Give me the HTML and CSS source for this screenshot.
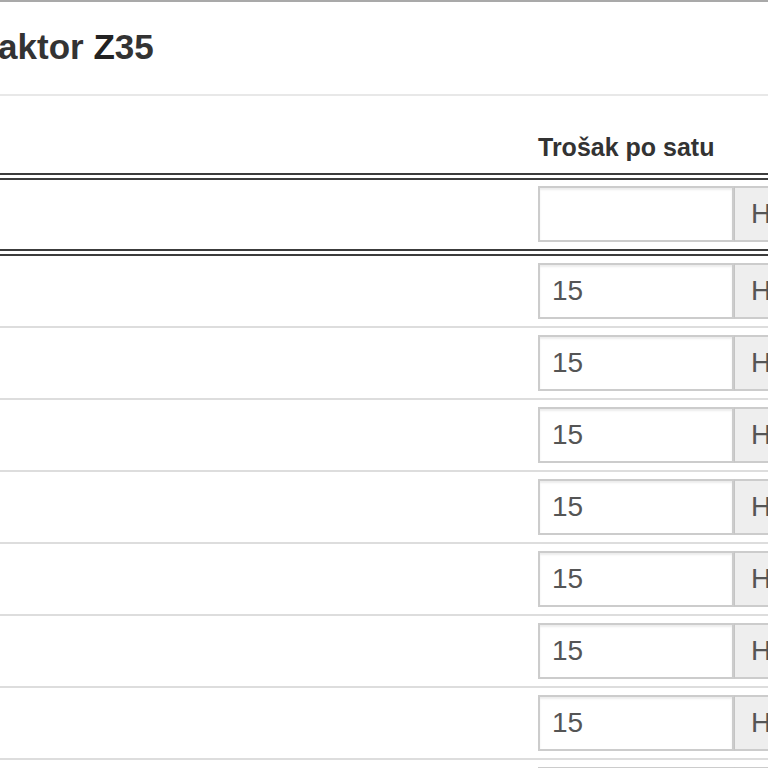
FILE: index.html
```html
<!DOCTYPE html>
<html lang="hr">
<head>
<meta charset="utf-8">
<title>Traktor Z35</title>
<link rel="stylesheet" href="styles.css">
</head>
<body>
<div class="modal">
  <div class="modal-header">
    <h4 class="modal-title">Traktor <b>Z</b>35</h4>
  </div>
  <div class="modal-body">
    <table class="cost-table">
      <thead>
        <tr><th class="col-name"></th><th class="col-cost">Trošak po satu</th></tr>
      </thead>
      <tbody class="default-row">
        <tr>
          <td class="col-name"></td>
          <td class="col-cost"><div class="input-group"><input class="form-control" type="text" value=""><span class="addon">HRK</span></div></td>
        </tr>
      </tbody>
      <tbody class="rows">
        <tr><td class="col-name"></td><td class="col-cost"><div class="input-group"><input class="form-control" type="text" value="15"><span class="addon">HRK</span></div></td></tr>
        <tr><td class="col-name"></td><td class="col-cost"><div class="input-group"><input class="form-control" type="text" value="15"><span class="addon">HRK</span></div></td></tr>
        <tr><td class="col-name"></td><td class="col-cost"><div class="input-group"><input class="form-control" type="text" value="15"><span class="addon">HRK</span></div></td></tr>
        <tr><td class="col-name"></td><td class="col-cost"><div class="input-group"><input class="form-control" type="text" value="15"><span class="addon">HRK</span></div></td></tr>
        <tr><td class="col-name"></td><td class="col-cost"><div class="input-group"><input class="form-control" type="text" value="15"><span class="addon">HRK</span></div></td></tr>
        <tr><td class="col-name"></td><td class="col-cost"><div class="input-group"><input class="form-control" type="text" value="15"><span class="addon">HRK</span></div></td></tr>
        <tr><td class="col-name"></td><td class="col-cost"><div class="input-group"><input class="form-control" type="text" value="15"><span class="addon">HRK</span></div></td></tr>
        <tr><td class="col-name"></td><td class="col-cost"><div class="input-group"><input class="form-control" type="text" value="15"><span class="addon">HRK</span></div></td></tr>
      </tbody>
    </table>
  </div>
</div>
</body>
</html>
```
FILE: styles.css
```css
html, body {
  margin: 0;
  padding: 0;
  background: #fff;
  overflow: hidden;
}
body {
  font-family: "Liberation Sans", Arial, sans-serif;
  color: #333;
}
.modal {
  margin-left: -35px;
  width: 1000px;
  border-top: 2px solid #a9a9a9;
  background: #fff;
}
.modal-header {
  padding: 26px 0 28px 0;
  border-bottom: 2px solid #e8e8e8;
}
.modal-title {
  margin: 0;
  font-size: 35px;
  line-height: 38px;
  font-weight: bold;
  color: #333;
}
.modal-title b {
  color: #222;
}
.modal-body {
  padding-top: 30px;
}
.cost-table {
  border-collapse: separate;
  border-spacing: 0;
  width: 1000px;
}
.cost-table th,
.cost-table td {
  text-align: left;
  vertical-align: top;
}
.col-name {
  width: 559px;
  padding: 0;
}
.cost-table th.col-cost {
  padding: 6px 14px 11px;
  font-size: 25px;
  line-height: 30px;
  font-weight: bold;
  color: #333;
}
.cost-table thead th {
  border-bottom: 7px double #3c3c3c;
}
.cost-table td.col-cost {
  padding: 6px 14px 7px;
}
.default-row td {
  border-bottom: 7px double #3c3c3c;
}
.rows td {
  border-top: 2px solid #dddddd;
}
.rows tr:first-child td {
  border-top: 0;
}
.rows tr:first-child td.col-cost {
  padding-top: 7px;
}
.rows td.col-cost {
  padding: 7px 14px 7px;
}
.input-group {
  display: flex;
  height: 56px;
}
.form-control {
  box-sizing: border-box;
  width: 196px;
  height: 56px;
  margin: 0;
  border: 2px solid #cccccc;
  padding: 0 12px;
  font-family: "Liberation Sans", Arial, sans-serif;
  font-size: 28px;
  color: #555;
  background: #fff;
  box-shadow: inset 0 2px 2px rgba(0, 0, 0, 0.075);
  outline: none;
}
.addon {
  box-sizing: border-box;
  height: 56px;
  display: flex;
  align-items: center;
  padding: 0 15px 0 16px;
  border: 2px solid #cccccc;
  border-left: 1px solid #c4c4c4;
  background: #eeeeee;
  font-size: 28px;
  color: #555;
}
```
